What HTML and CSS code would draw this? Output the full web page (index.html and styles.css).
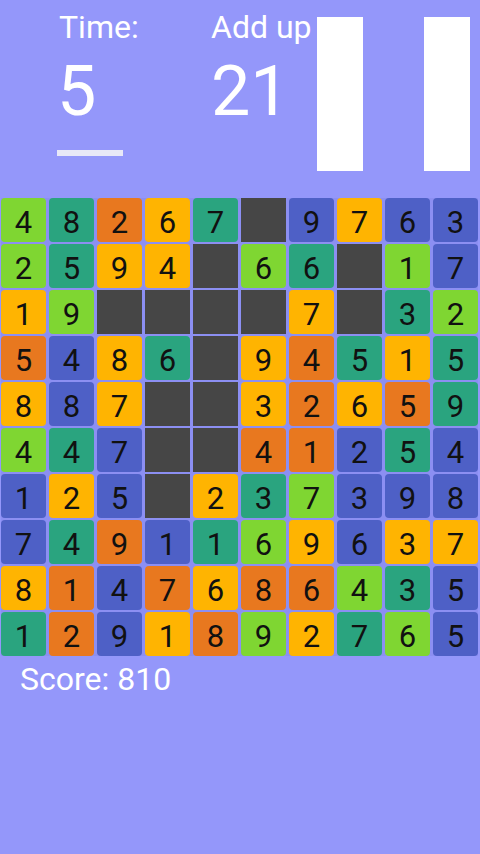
FILE: index.html
```html
<!DOCTYPE html>
<html>
<head>
<meta charset="utf-8">
<link rel="stylesheet" href="styles.css">
</head>
<body>
<div class="header">
  <div class="col col-time">
    <div class="label">Time:</div>
    <div class="value">5</div>
    <div class="underline"></div>
  </div>
  <div class="col col-add">
    <div class="label">Add up</div>
    <div class="value">21</div>
  </div>
  <div class="bar"></div>
  <div class="bar bar2"></div>
</div>
<div class="grid">
  <div class="c g">4</div><div class="c t">8</div><div class="c o">2</div><div class="c y">6</div><div class="c t">7</div><div class="c x"></div><div class="c b">9</div><div class="c y">7</div><div class="c b">6</div><div class="c b">3</div>
  <div class="c g">2</div><div class="c t">5</div><div class="c y">9</div><div class="c y">4</div><div class="c x"></div><div class="c g">6</div><div class="c t">6</div><div class="c x"></div><div class="c g">1</div><div class="c b">7</div>
  <div class="c y">1</div><div class="c g">9</div><div class="c x"></div><div class="c x"></div><div class="c x"></div><div class="c x"></div><div class="c y">7</div><div class="c x"></div><div class="c t">3</div><div class="c g">2</div>
  <div class="c o">5</div><div class="c b">4</div><div class="c y">8</div><div class="c t">6</div><div class="c x"></div><div class="c y">9</div><div class="c o">4</div><div class="c t">5</div><div class="c y">1</div><div class="c t">5</div>
  <div class="c y">8</div><div class="c b">8</div><div class="c y">7</div><div class="c x"></div><div class="c x"></div><div class="c y">3</div><div class="c o">2</div><div class="c y">6</div><div class="c o">5</div><div class="c t">9</div>
  <div class="c g">4</div><div class="c t">4</div><div class="c b">7</div><div class="c x"></div><div class="c x"></div><div class="c o">4</div><div class="c o">1</div><div class="c b">2</div><div class="c t">5</div><div class="c b">4</div>
  <div class="c b">1</div><div class="c y">2</div><div class="c b">5</div><div class="c x"></div><div class="c y">2</div><div class="c t">3</div><div class="c g">7</div><div class="c b">3</div><div class="c b">9</div><div class="c b">8</div>
  <div class="c b">7</div><div class="c t">4</div><div class="c o">9</div><div class="c b">1</div><div class="c t">1</div><div class="c g">6</div><div class="c y">9</div><div class="c b">6</div><div class="c y">3</div><div class="c y">7</div>
  <div class="c y">8</div><div class="c o">1</div><div class="c b">4</div><div class="c o">7</div><div class="c y">6</div><div class="c o">8</div><div class="c o">6</div><div class="c g">4</div><div class="c t">3</div><div class="c b">5</div>
  <div class="c t">1</div><div class="c o">2</div><div class="c b">9</div><div class="c y">1</div><div class="c o">8</div><div class="c g">9</div><div class="c y">2</div><div class="c t">7</div><div class="c g">6</div><div class="c b">5</div>
</div>
<div class="score">Score: 810</div>
</body>
</html>
```

FILE: styles.css
```css
html, body {
  margin: 0;
  padding: 0;
}
body {
  width: 480px;
  height: 854px;
  background: #9497fa;
  font-family: Roboto, "Liberation Sans", sans-serif;
  color: #ffffff;
  overflow: hidden;
}
.header {
  display: flex;
  height: 198px;
  box-sizing: border-box;
  padding: 11px 0 0 57px;
}
.col {
  display: flex;
  flex-direction: column;
}
.col-time {
  width: 154px;
}
.col-add {
  width: 106px;
}
.label {
  font-size: 32px;
  line-height: 32px;
  margin-left: 2px;
  white-space: nowrap;
}
.value {
  font-size: 70px;
  line-height: 70px;
  margin-top: 13px;
}
.col-add .label,
.col-add .value {
  margin-left: 0;
}
.underline {
  width: 66px;
  height: 6px;
  margin-top: 24px;
  background: #e8e8f7;
}
.bar {
  width: 46px;
  height: 154px;
  margin-top: 6px;
  background: #ffffff;
}
.bar2 {
  margin-left: 61px;
}
.grid {
  display: grid;
  grid-template-columns: repeat(10, 45px);
  grid-auto-rows: 44px;
  column-gap: 3px;
  row-gap: 2px;
  margin-left: 1px;
  width: 477px;
  background: #8c8ff2;
}
.c {
  border-radius: 4px;
  display: flex;
  align-items: center;
  justify-content: center;
  font-size: 31px;
  line-height: 31px;
  padding-top: 5px;
  box-sizing: border-box;
  color: #111111;
}
.g { background: #7fd632; }
.t { background: #2aa47f; }
.o { background: #e8781f; }
.y { background: #ffb401; }
.b { background: #4e60c6; }
.x { background: #464646; border-radius: 0; }
.score {
  font-size: 32px;
  line-height: 32px;
  margin-top: 7px;
  padding-left: 20px;
}
```
